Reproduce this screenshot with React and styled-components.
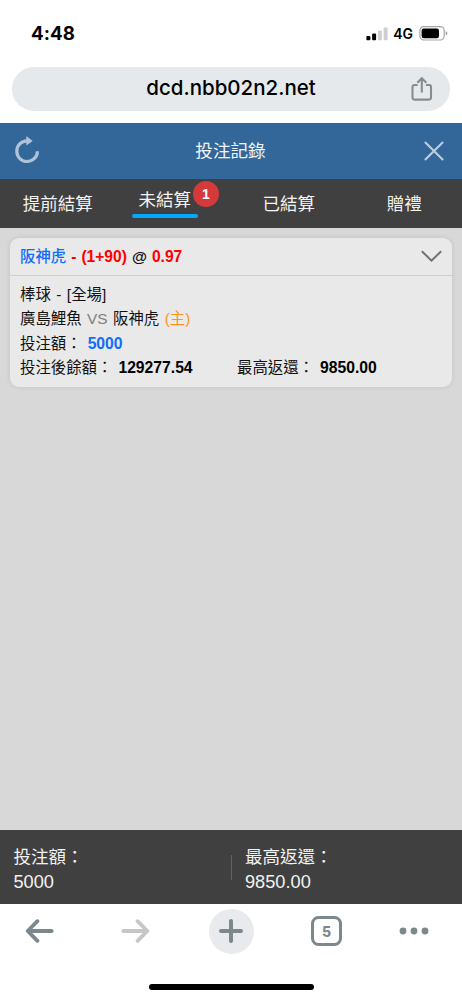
import React, { useState } from 'react';
import styled, { createGlobalStyle } from 'styled-components';

const TABS = [
  { id: 'early', label: '提前結算' },
  { id: 'open', label: '未結算', count: 1 },
  { id: 'settled', label: '已結算' },
  { id: 'gift', label: '贈禮' },
];

function App() {
  const [activeTab, setActiveTab] = useState('open');

  return (
    <Screen>
      <CSSReset />

      <StatusBar.Wrapper>
        <StatusBar.Time>4:48</StatusBar.Time>
        <StatusBar.Icons>
          <SignalIcon />
          <StatusBar.Network>4G</StatusBar.Network>
          <BatteryIcon />
        </StatusBar.Icons>
      </StatusBar.Wrapper>

      <AddressBar.Wrapper>
        <AddressBar.Field>
          <AddressBar.Url>dcd.nbb02n2.net</AddressBar.Url>
          <ShareIcon />
        </AddressBar.Field>
      </AddressBar.Wrapper>

      <Header.Wrapper>
        <Header.Button><RefreshIcon /></Header.Button>
        <Header.Title>投注記錄</Header.Title>
        <Header.Button><CloseIcon /></Header.Button>
      </Header.Wrapper>

      <Tabs.Wrapper>
        {TABS.map(({ id, label, count }) => (
          <Tabs.Item key = { id } onClick = { () => setActiveTab(id) }>
            <Tabs.Label $active = { activeTab === id } $hasBadge = { Boolean(count) }>
              {label}
              {count && <Tabs.Badge>{count}</Tabs.Badge>}
            </Tabs.Label>
          </Tabs.Item>
        ))}
      </Tabs.Wrapper>

      <Content>
        <Card.Wrapper>
          <Card.Header>
            <Card.Title>
              <Card.Pick>阪神虎</Card.Pick> <Card.Odds>- (1+90)</Card.Odds> @ <Card.Odds>0.97</Card.Odds>
            </Card.Title>
            <ChevronIcon />
          </Card.Header>
          <Card.Body>
            <Card.Row>棒球 - [全場]</Card.Row>
            <Card.Row>
              廣島鯉魚 <Card.Versus>VS</Card.Versus> 阪神虎 <Card.Home>(主)</Card.Home>
            </Card.Row>
            <Card.Row>投注額： <Card.Value $color = "#0f6dfa">5000</Card.Value></Card.Row>
            <Card.Columns>
              <Card.Row>投注後餘額： <Card.Value>129277.54</Card.Value></Card.Row>
              <Card.Row>最高返還： <Card.Value>9850.00</Card.Value></Card.Row>
            </Card.Columns>
          </Card.Body>
        </Card.Wrapper>
      </Content>

      <Summary.Wrapper>
        <Summary.Item>
          <Summary.Label>投注額：</Summary.Label>
          <Summary.Value>5000</Summary.Value>
        </Summary.Item>
        <Summary.Divider />
        <Summary.Item>
          <Summary.Label>最高返還：</Summary.Label>
          <Summary.Value>9850.00</Summary.Value>
        </Summary.Item>
      </Summary.Wrapper>

      <Browser.Wrapper>
        <Browser.Nav>
          <ArrowIcon color = "#7d888d" />
          <ArrowIcon color = "#c4c6c7" forward />
          <Browser.NewTab><PlusIcon /></Browser.NewTab>
          <Browser.TabCount>5</Browser.TabCount>
          <MoreIcon />
        </Browser.Nav>
        <Browser.HomeIndicator />
      </Browser.Wrapper>
    </Screen>
  );
}

const SignalIcon = () => (
  <svg width="22" height="14" viewBox="0 0 22 14">
    <rect x="0.4" y="9" width="4" height="4.2" rx="1" fill="#000" />
    <rect x="6.1" y="6.6" width="4" height="6.6" rx="1" fill="#000" />
    <rect x="11.9" y="3.6" width="4" height="9.6" rx="1" fill="#cfcfcf" />
    <rect x="17.6" y="0.4" width="4" height="12.8" rx="1" fill="#cfcfcf" />
  </svg>
);

const BatteryIcon = () => (
  <svg width="29" height="15" viewBox="0 0 29 15">
    <rect x="0.9" y="0.6" width="24.3" height="13.4" rx="4" fill="none" stroke="#a5a5a5" strokeWidth="1.2" />
    <rect x="2.6" y="2.5" width="17.4" height="9.8" rx="2.2" fill="#000" />
    <path d="M26.7 5 Q28.4 5.7 28.4 7.3 Q28.4 8.9 26.7 9.6 Z" fill="#a5a5a5" />
  </svg>
);

const ShareIcon = () => (
  <svg width="22" height="26" viewBox="0 0 22 26" fill="none" stroke="#858d91" strokeWidth="2.1">
    <path d="M6.6 9H3.5Q1.5 9 1.5 11V21.6Q1.5 23.6 3.5 23.6H18Q20 23.6 20 21.6V11Q20 9 18 9H14.9" />
    <path d="M10.8 16.6V2.4M6.3 6.8L10.8 2.3L15.3 6.8" />
  </svg>
);

const RefreshIcon = () => (
  <svg width="26" height="28" viewBox="0 0 26 28">
    <path d="M23.4 15.2A10.3 10.3 0 1 1 13 4.9" fill="none" stroke="#aec3d9" strokeWidth="3.2" />
    <path d="M12.3 0.1L18.7 4.9L12.3 9.6Z" fill="#aec3d9" />
  </svg>
);

const CloseIcon = () => (
  <svg width="20" height="20" viewBox="0 0 20 20" stroke="#bdcddd" strokeWidth="2.1">
    <path d="M0.9 0.9L19.1 19.1M19.1 0.9L0.9 19.1" />
  </svg>
);

const ChevronIcon = () => (
  <svg width="21" height="13" viewBox="0 0 21 13" fill="none" stroke="#717171" strokeWidth="2">
    <path d="M0.8 1.2L10.5 10.7L20.2 1.2" />
  </svg>
);

const ArrowIcon = ({ color, forward }) => (
  <svg width="29" height="24" viewBox="0 0 29 24" fill="none" stroke={color} strokeWidth="3.8" strokeLinecap="round" strokeLinejoin="round">
    {forward
      ? <path d="M2.3 12H25.7M16.6 2.2L26.3 12L16.6 21.8" />
      : <path d="M26.7 12H3.3M12.4 2.2L2.7 12L12.4 21.8" />}
  </svg>
);

const PlusIcon = () => (
  <svg width="26" height="26" viewBox="0 0 26 26" stroke="#7d888d" strokeWidth="4" strokeLinecap="round">
    <path d="M13 3V23M3 13H23" />
  </svg>
);

const MoreIcon = () => (
  <svg width="30" height="8" viewBox="0 0 30 8" fill="#7d888d">
    <circle cx="4" cy="4" r="3.4" />
    <circle cx="15" cy="4" r="3.4" />
    <circle cx="26" cy="4" r="3.4" />
  </svg>
);

const CSSReset = createGlobalStyle`
  *,
  *::before,
  *::after {
    box-sizing: border-box;
    margin: 0;
    padding: 0;
  }

  body {
    background-color: #ffffff;
    font-family: "Liberation Sans", "Noto Sans CJK TC", sans-serif;
  }

  svg {
    display: block;
    flex: none;
  }
`;

const Screen = styled.main`
  display: flex;
  flex-direction: column;
  height: 1000px;
  overflow: hidden;
  width: 462px;
`;

const StatusBar = {
  Wrapper: styled.div`
    align-items: center;
    display: flex;
    height: 67px;
    justify-content: space-between;
    padding: 0 14px 0 31px;
  `,
  Time: styled.span`
    font-family: Inter, sans-serif;
    font-size: 18.7px;
    font-weight: 700;
    letter-spacing: 0.1px;
  `,
  Icons: styled.div`
    align-items: center;
    display: flex;
  `,
  Network: styled.span`
    font-family: Inter, sans-serif;
    font-size: 14px;
    font-weight: 600;
    margin: 0 6px 0 5px;
  `,
};

const AddressBar = {
  Wrapper: styled.div`
    height: 56px;
    padding: 0 12px;
  `,
  Field: styled.div`
    align-items: center;
    background-color: #e5e9ec;
    border-radius: 22px;
    display: flex;
    height: 44px;
    padding-right: 17px;
  `,
  Url: styled.span`
    flex: 1;
    font-family: Inter, sans-serif;
    font-size: 20.5px;
    font-weight: 500;
    padding: 0 0 3px 39px;
    text-align: center;
  `,
};

const Header = {
  Wrapper: styled.header`
    align-items: center;
    background-color: #336799;
    display: flex;
    height: 56px;
    justify-content: space-between;
    padding: 0 18px 0 14px;
  `,
  Button: styled.button`
    background: transparent;
    border: none;
    cursor: pointer;
    display: flex;

    &:first-child {
      padding-bottom: 3px;
    }
  `,
  Title: styled.h1`
    color: #f0f4f7;
    font-size: 17.6px;
    font-weight: 400;
    padding: 0 3px 4px 0;
  `,
};

const Tabs = {
  Wrapper: styled.nav`
    background-color: #404040;
    display: grid;
    grid-template-columns: repeat(4, 1fr);
    height: 49px;
  `,
  Item: styled.button`
    align-items: center;
    background: transparent;
    border: none;
    color: #f2f2f2;
    cursor: pointer;
    display: flex;
    font-family: inherit;
    font-size: 17.5px;
    justify-content: center;
  `,
  Label: styled.span`
    line-height: 28px;
    margin-bottom: ${({ $active }) => $active ? '4px' : '0'};
    margin-right: ${({ $hasBadge }) => $hasBadge ? '17px' : '0'};
    padding: 0 6.5px;
    position: relative;

    &::after {
      background-color: #00a8ff;
      border-radius: 2px;
      content: "";
      display: ${({ $active }) => $active ? 'block' : 'none'};
      height: 4px;
      margin: 0 -6.5px;
    }
  `,
  Badge: styled.span`
    background-color: #d43a3a;
    border-radius: 50%;
    color: #ffffff;
    font-size: 14px;
    font-weight: 700;
    height: 26px;
    left: 61px;
    line-height: 26px;
    position: absolute;
    text-align: center;
    top: -5px;
    width: 26px;
  `,
};

const Content = styled.section`
  background-color: #d8d8d8;
  flex: 1;
  padding: 10px 10px 0;
`;

const Card = {
  Wrapper: styled.article`
    background-color: #e9e9e9;
    border-radius: 9px;
    box-shadow: 0 0 5px rgba(0, 0, 0, 0.1);
    color: #111111;
    font-size: 15.4px;
    height: 148.5px;
    word-spacing: 1.2px;
  `,
  Header: styled.div`
    align-items: center;
    border-bottom: 1px solid #cfcfcf;
    display: flex;
    height: 38px;
    justify-content: space-between;
    padding: 0 10px;
  `,
  Title: styled.h2`
    font-size: inherit;
    font-weight: 700;
    line-height: 24px;
    word-spacing: 0.7px;
  `,
  Pick: styled.span`
    color: #0f6dfa;
    font-weight: 500;
  `,
  Odds: styled.span`
    color: #ff0000;
    font-size: 15.6px;
  `,
  Body: styled.div`
    padding: 6.6px 10px 0;
  `,
  Row: styled.p`
    line-height: 24.6px;
    white-space: nowrap;
  `,
  Columns: styled.div`
    display: grid;
    grid-template-columns: 217px 1fr;
  `,
  Versus: styled.span`
    color: #808080;
  `,
  Home: styled.span`
    color: #ff9320;
  `,
  Value: styled.strong`
    color: ${({ $color }) => $color || '#000000'};
    font-size: 15.7px;
    margin-left: 0.6px;
  `,
};

const Summary = {
  Wrapper: styled.footer`
    align-items: center;
    background-color: #404040;
    color: #f2f2f2;
    display: flex;
    height: 74px;
  `,
  Item: styled.div`
    flex: 1;
    padding: 4px 0 0 13.5px;
  `,
  Label: styled.p`
    font-size: 17.5px;
    line-height: 26px;
  `,
  Value: styled.p`
    font-size: 18.2px;
    line-height: 25px;
  `,
  Divider: styled.span`
    background-color: #626262;
    height: 25px;
    width: 1px;
  `,
};

const Browser = {
  Wrapper: styled.div`
    align-items: center;
    display: flex;
    flex-direction: column;
    height: 96px;
  `,
  Nav: styled.div`
    align-items: center;
    display: grid;
    grid-template-columns: 78px 114px 78px 113px 61px;
    height: 54px;
    justify-items: center;
    width: 100%;
  `,
  NewTab: styled.div`
    align-items: center;
    background-color: #e8eaed;
    border-radius: 50%;
    display: flex;
    height: 45px;
    justify-content: center;
    width: 45px;
  `,
  TabCount: styled.div`
    border: 3px solid #7d888d;
    border-radius: 7.5px;
    color: #7d888d;
    font-family: Inter, sans-serif;
    font-size: 14px;
    font-weight: 800;
    height: 30px;
    line-height: 25px;
    text-align: center;
    width: 31px;
  `,
  HomeIndicator: styled.div`
    background-color: #000000;
    border-radius: 3px;
    height: 6px;
    margin-top: 26px;
    width: 165px;
  `,
};

export default App;
